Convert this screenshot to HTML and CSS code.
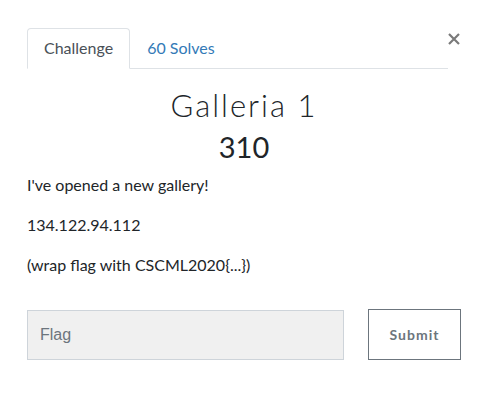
FILE: index.html
```html
<!DOCTYPE html>
<html>
<head>
<meta charset="utf-8">
<link rel="stylesheet" href="styles.css">
</head>
<body>
<div class="modal">
  <div class="head">
    <ul class="tabs">
      <li class="tab active">Challenge</li>
      <li class="tab link">60 Solves</li>
    </ul>
    <button class="close" aria-label="Close"><svg width="12" height="12" viewBox="0 0 12 12"><path d="M1 1 L11 11 M11 1 L1 11" stroke="#7a7a7a" stroke-width="2.2" fill="none"/></svg></button>
  </div>
  <h2 class="title">Galleria 1</h2>
  <h3 class="points">310</h3>
  <div class="desc">
    <p>I've opened a new gallery!</p>
    <p>134.122.94.112</p>
    <p>(wrap flag with CSCML2020{...})</p>
  </div>
  <div class="form">
    <input class="flag" type="text" placeholder="Flag">
    <button class="submit">Submit</button>
  </div>
</div>
</body>
</html>
```
FILE: styles.css
```css
* { box-sizing: border-box; }
html, body { margin: 0; padding: 0; background: #fff; }
body {
  font-family: Lato, "Noto Sans", sans-serif;
  color: #212529;
  font-size: 16px;
  line-height: 24px;
}
.modal {
  padding: 28px 28px 0 27px;
  width: 489px;
}
.head {
  display: flex;
  align-items: flex-start;
}
.tabs {
  list-style: none;
  margin: 0;
  padding: 0;
  display: flex;
  flex: 1;
  border-bottom: 1px solid #dee2e6;
}
.tab {
  padding: 7px 16px 8px;
  font-size: 16px;
  line-height: 24px;
  border: 1px solid transparent;
  border-top-left-radius: 4px;
  border-top-right-radius: 4px;
  margin-bottom: -1px;
}
.tab.active {
  color: #495057;
  border-color: #dee2e6 #dee2e6 #fff;
  background: #fff;
}
.tab.link { color: #337ab7; }
.close {
  border: 0;
  background: none;
  padding: 0;
  margin: 5px 1px 0 0;
  width: 12px;
  height: 12px;
  display: flex;
}
.title {
  margin: 18px 0 0;
  text-align: center;
  font-weight: 300;
  font-size: 31px;
  line-height: 36px;
  letter-spacing: 2px;
  color: #212529;
}
.points {
  margin: 8px 0 0;
  text-align: center;
  font-weight: 400;
  font-size: 29px;
  line-height: 32px;
  color: #212529;
}
.desc { margin-top: 10px; }
.desc p { margin: 0 0 16px; font-size: 16px; line-height: 24px; }
.form {
  display: flex;
  align-items: flex-start;
  margin-top: 32px;
  gap: 24px;
}
.flag {
  width: 317px;
  height: 50px;
  background: #f0f0f0;
  border: 1px solid #ced4da;
  padding: 0 12px;
  font-family: "Liberation Sans", Arial, sans-serif;
  font-size: 16px;
  color: #495057;
  margin: 1px 0 0;
}
.flag::placeholder { color: #6c757d; }
.submit {
  width: 93px;
  height: 51px;
  background: #fff;
  border: 1px solid #6c757d;
  font-family: Lato, sans-serif;
  font-weight: bold;
  font-size: 14px;
  letter-spacing: 1px;
  color: #6c757d;
  margin: 0;
}
```
